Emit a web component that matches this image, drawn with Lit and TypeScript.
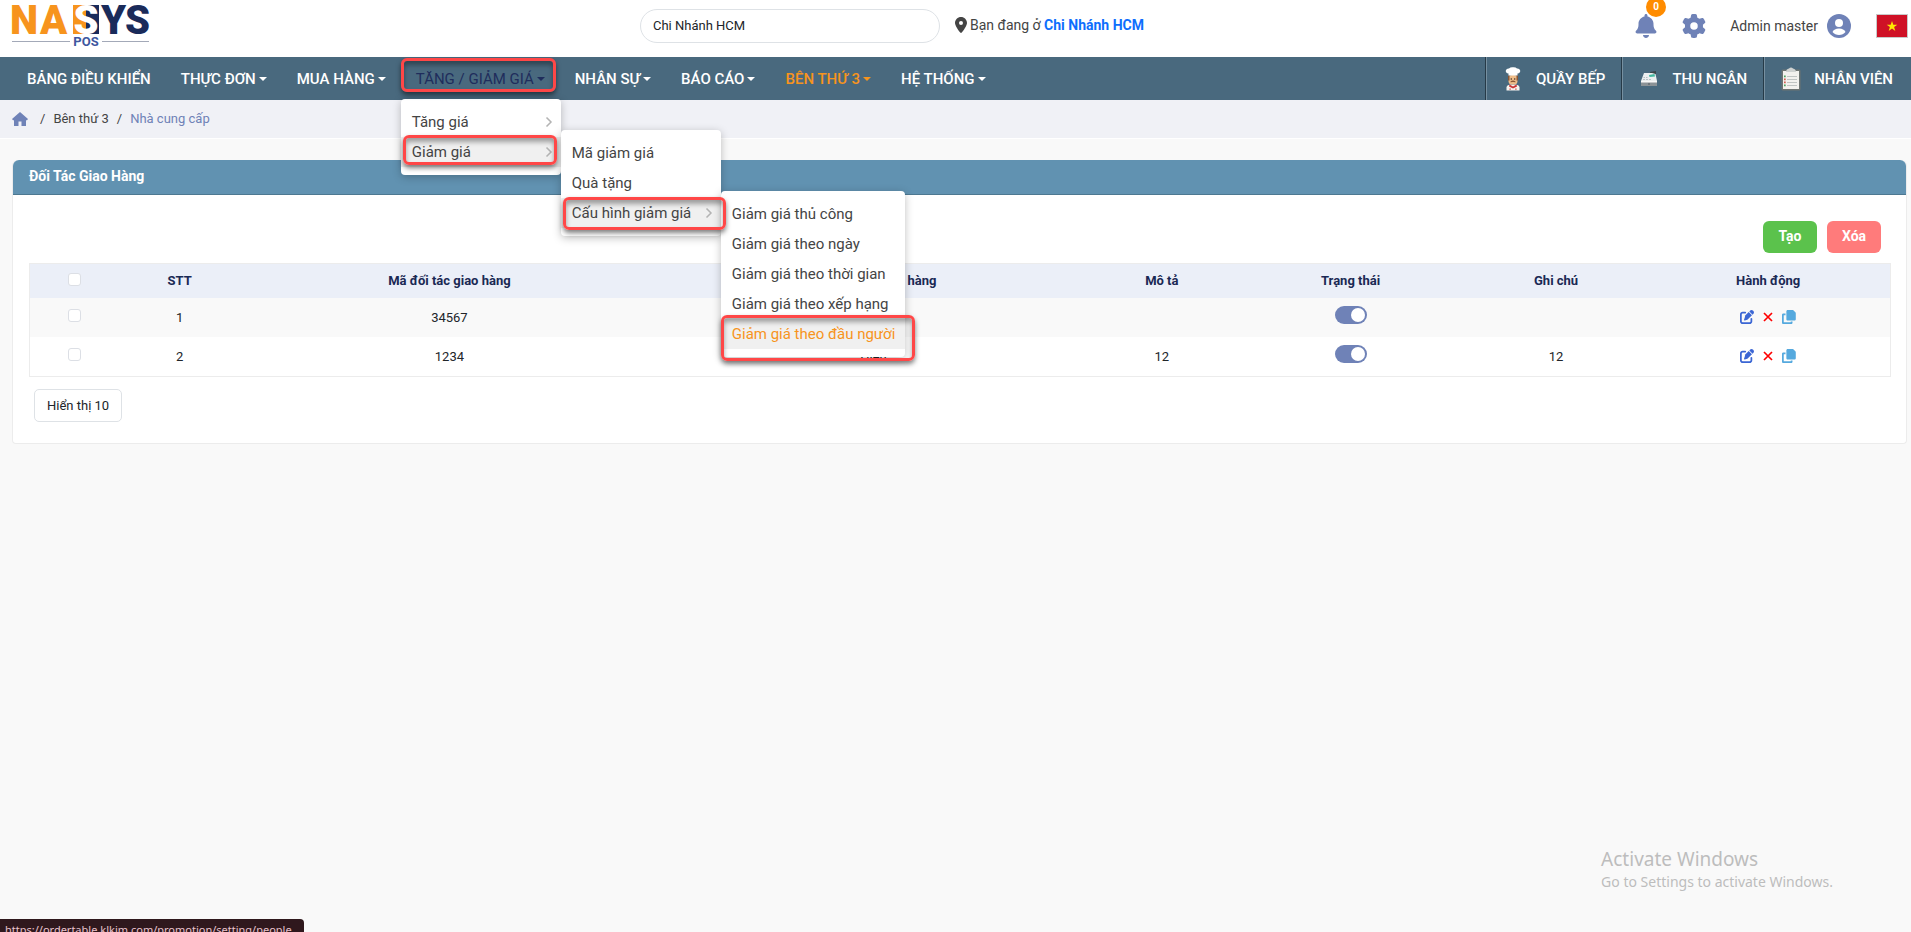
import { LitElement, html, css, svg, nothing } from "lit";
import { customElement, state } from "lit/decorators.js";

interface NavItem {
  label: string;
  caret: boolean;
  tone?: "open" | "current";
}

interface Partner {
  index: number;
  code: string;
  name: string;
  description: string;
  note: string;
}

const NAV: NavItem[] = [
  { label: "BẢNG ĐIỀU KHIỂN", caret: false },
  { label: "THỰC ĐƠN", caret: true },
  { label: "MUA HÀNG", caret: true },
  { label: "TĂNG / GIẢM GIÁ", caret: true, tone: "open" },
  { label: "NHÂN SỰ", caret: true },
  { label: "BÁO CÁO", caret: true },
  { label: "BÊN THỨ 3", caret: true, tone: "current" },
  { label: "HỆ THỐNG", caret: true },
];

const PARTNERS: Partner[] = [
  { index: 1, code: "34567", name: "", description: "", note: "" },
  { index: 2, code: "1234", name: "Hiển", description: "12", note: "12" },
];

const chefIcon = svg`<svg class="station-icon" viewBox="0 0 24 24" aria-hidden="true">
  <path d="M5.500 23.500v-3q0-2.500 4-3h5q4 .5 4 3v3z" fill="#f7f4ef"/>
  <path d="M8.500 17.500l3.500 2 3.500-2 .5 2-4 2-4-2z" fill="#c93434"/>
  <rect x="7.500" y="8" width="9" height="9.500" rx="3.500" fill="#efbd89"/>
  <path d="M7 8.500h1.500v5H7zM15.500 8.500H17v5h-1.500z" fill="#8a5635"/>
  <path d="M9.500 14.500q2.500-1.800 5 0v.8q-2.500-.8-5 0z" fill="#8a5635"/>
  <path d="M7.500 8.500V6.500Q4.500 6 4.800 3.500 5.500 1.300 8 1.500 9.500 0 12 .3 14.500 0 16 1.500q2.500-.2 3.200 2Q19.500 6 16.500 6.500v2z" fill="#fff"/>
  <circle cx="10.300" cy="12" r=".8" fill="#40302a"/><circle cx="13.700" cy="12" r=".8" fill="#40302a"/>
  <path d="M8.500 21.500h1.200v1.200H8.500zM14.300 21.500h1.200v1.200h-1.200z" fill="#c93434"/>
</svg>`;

const registerIcon = svg`<svg class="station-icon" viewBox="0 0 24 24" aria-hidden="true">
  <path d="M13 5l6-1v3l-5 1z" fill="#3d4448"/>
  <path d="M7 6h8l3.500 1 1.500 7H4z" fill="#eceff0"/>
  <path d="M12 8l5.500-1 .5 2.500-5.500.5z" fill="#43b8a0"/>
  <path d="M6.500 10H8v1H6.500zM9 10h1.500v1H9zM6 12h2v1H6zM9 12h2v1H9zM12 12h2v1h-2z" fill="#b9c1c5"/>
  <path d="M4 14.500h16V19H4z" fill="#8b9296"/>
  <path d="M4 14h16v1.500H4z" fill="#f8f8f8"/>
  <path d="M11 16.500h2v1h-2z" fill="#555b60"/>
</svg>`;

const clipboardIcon = svg`<svg class="station-icon" viewBox="0 0 24 24" aria-hidden="true">
  <rect x="2.500" y="2.500" width="19" height="21" rx="1.500" fill="#6d7472"/>
  <rect x="4" y="4" width="16" height="18" fill="#f2f1ee"/>
  <path d="M7 5q0-3 3-3.500Q12-.5 14 1.500q3 .5 3 3.500z" fill="#cfd2d1"/>
  <path d="M8 9h10v1H8zM8 12h10v1H8zM8 15h10v1H8zM8 18h10v1H8z" fill="#c0c4c3"/>
  <path d="M5 8.500h1.700v1.700H5z" fill="#4aa35c"/>
  <path d="M5 11.500h1.700v1.700H5zM5 14.500h1.700v1.700H5z" fill="#d25b4d"/>
  <path d="M5 17.500h1.700v1.700H5z" fill="#4aa35c"/>
</svg>`;

const STATIONS = [
  { label: "QUẦY BẾP", icon: chefIcon },
  { label: "THU NGÂN", icon: registerIcon },
  { label: "NHÂN VIÊN", icon: clipboardIcon },
];

const chevron = svg`<svg class="chevron" viewBox="0 0 8 12" aria-hidden="true">
  <path d="M1.500 1.500 6 6l-4.500 4.500" fill="none" stroke="#b3b3b3" stroke-width="1.500"/>
</svg>`;

@customElement("app-root")
export class AppRoot extends LitElement {
  @state() private active = [true, true];

  static styles = css`
    :host {
      display: flex;
      flex-direction: column;
      position: relative;
      min-height: 100vh;
      overflow: hidden;
      background: #f9f9f9;
      color: #444;
      font-family: Roboto, "Liberation Sans", sans-serif;
      font-size: 14px;
      line-height: 20px;
    }
    *, *::before, *::after { box-sizing: border-box; }
    a { color: inherit; text-decoration: none; }
    button { font: inherit; cursor: pointer; }
    ul, ol { list-style: none; margin: 0; padding: 0; }
    svg { display: block; flex: none; }

    .topbar {
      display: grid;
      grid-template-columns: repeat(3, 1fr);
      height: 57px;
      background: #fff;
    }
    .brand { padding-left: 12px; }
    .logo { width: 138px; height: 48px; overflow: visible; }
    .logo text { font-family: Roboto, sans-serif; font-weight: 900; }
    .logo .tagline { font-weight: 700; }
    .branch { display: flex; align-items: center; gap: 15px; height: 34px; margin-top: 9px; padding-left: 3px; white-space: nowrap; }
    .branch-input {
      width: 300px;
      height: 34px;
      border: 1px solid #dee2e6;
      border-radius: 17px;
      padding: 0 12px 2px;
      background: #fff;
      color: #212529;
      font: 13px/20px Roboto, sans-serif;
      outline: none;
    }
    .place { display: flex; align-items: center; gap: 3px; height: 32px; align-self: flex-start; }
    .place-pin { width: 12px; height: 16px; }
    .place-name { color: #0d6efd; font-weight: 700; }
    .tools { display: flex; justify-content: flex-end; align-items: center; height: 34px; margin-top: 9px; padding-right: 3px; }
    .tool { position: relative; display: flex; padding: 0; border: 0; background: none; }
    .tool svg { width: 24px; height: 24px; }
    .bell, .gear { margin-right: 24px; }
    .badge {
      position: absolute;
      left: 12px;
      top: -17px;
      width: 20px;
      height: 20px;
      border-radius: 10px;
      background: #ff8c00;
      color: #fff;
      font-size: 10px;
      font-weight: 700;
      text-align: center;
    }
    .account { display: flex; align-items: center; gap: 9px; margin-right: 25px; white-space: nowrap; }
    .account svg { width: 24px; height: 24px; }
    .flag { padding: 0; border: 0; background: none; }
    .flag svg { width: 32px; height: 24px; }

    .navbar { display: flex; height: 43px; background: #49697e; color: #fff; font-size: 15px; }
    .menu { display: flex; flex: 1; padding-left: 12px; }
    .menu-item { position: relative; display: flex; }
    .menu-link { display: flex; align-items: center; gap: 3px; padding: 0 15px; white-space: nowrap; font-weight: 500; }
    .menu-link.open { color: #1f2d5c; font-weight: 400; }
    .menu-link.current { color: #f7941d; }
    .caret { border: 4px solid transparent; border-top-color: currentColor; border-bottom: 0; }
    .stations { display: flex; padding-right: 2px; }
    .station {
      display: flex;
      align-items: center;
      gap: 11px;
      padding: 0 16px 0 15px;
      border-left: 1px solid #263a47;
      box-shadow: inset 1px 0 #7790a0;
      font-weight: 500;
      white-space: nowrap;
    }
    .station-icon { width: 24px; height: 24px; }

    .panel {
      position: absolute;
      z-index: 2;
      padding: 8px 0;
      border-radius: 4px;
      background: #fff;
      box-shadow: 0 2px 8px rgba(0, 0, 0, 0.25);
      color: #444;
      font-size: 15px;
      line-height: 30px;
      white-space: nowrap;
    }
    .panel-first { top: 42px; left: 0; width: 160px; }
    .panel-second { top: -7px; left: 160px; width: 160px; }
    .panel-third { top: -7px; left: 160px; width: 184px; }
    .panel-item { position: relative; }
    .panel-link { display: flex; justify-content: space-between; align-items: center; height: 30px; padding: 0 8px 0 11px; }
    .panel-link.hover { background: #f0f0f0; }
    .panel-link.picked { background: #f0f0f0; color: #f7941d; }
    .chevron { width: 8px; height: 12px; }
    .mark {
      position: absolute;
      z-index: 5;
      border: 3px solid #ff4747;
      border-radius: 6px;
      box-shadow: 0 3px 5px rgba(0, 0, 0, 0.5), inset 0 4px 5px rgba(0, 0, 0, 0.35);
      pointer-events: none;
    }
    .mark-menu { inset: 1px 4px 8px 0; }
    .mark-first { inset: -2px 4px 2px 2px; }
    .mark-second { inset: -1px -5px -2px 2px; }
    .mark-third { inset: -4px -10px -12px 0; }

    .crumbs {
      display: flex;
      align-items: center;
      gap: 12px;
      height: 39px;
      padding: 0 12px;
      border-bottom: 1px solid #fff;
      background: #f0f1f6;
      font-size: 13px;
    }
    .crumbs ol { display: flex; gap: 8px; }
    .crumbs li::before { content: "/"; margin-right: 8px; }
    .crumb-last a { color: #6f82b7; }
    .home svg { width: 16px; height: 14px; }

    .card {
      margin: 21px 4px 0 12px;
      border: 1px solid #ececec;
      border-top: 0;
      border-radius: 6px 6px 4px 4px;
      background: #fff;
    }
    .card-title {
      margin: 0;
      height: 35px;
      padding: 6px 16px;
      border-bottom: 1px solid #4d7891;
      border-radius: 6px 6px 0 0;
      background: #6192b1;
      color: #fff;
      font-size: 14px;
      line-height: 20px;
      font-weight: 700;
    }
    .card-body { padding: 26px 15px 21px 16px; }
    .actions { display: flex; justify-content: flex-end; gap: 10px; padding: 0 10px 10px; }
    .action { width: 54px; height: 32px; padding: 0 0 2px; border: 0; border-radius: 6px; color: #fff; font-weight: 700; }
    .create { background: #5bc24c; }
    .remove { background: #ff7b7b; }

    .grid {
      width: 100%;
      table-layout: fixed;
      border-collapse: separate;
      border-spacing: 0;
      border: 1px solid #ececec;
      color: #212529;
      font-size: 13px;
      text-align: center;
    }
    .grid th { height: 34px; padding: 0; background: #ebeff8; color: #1a2954; font-weight: 700; }
    .grid td { height: 39px; padding: 0; }
    .grid tbody tr:first-child td { background: #f9f9f9; }
    .c-check { width: 4.8%; }
    .c-index { width: 6.5%; }
    .c-code { width: 22.5%; }
    .c-name { width: 23.1%; }
    .c-text { width: 7.9%; }
    .c-state { width: 12.4%; }
    .c-note { width: 9.7%; }
    .check {
      appearance: none;
      display: block;
      width: 13px;
      height: 13px;
      margin: 0 auto 4px;
      border: 1px solid #dcdfe5;
      border-radius: 3px;
      background: #fff;
    }
    .switch {
      appearance: none;
      display: block;
      width: 32px;
      height: 18px;
      margin: 0 auto 5px;
      padding: 2px;
      border-radius: 9px;
      background: #b9c0d4;
    }
    .switch::before { content: ""; display: block; width: 14px; height: 14px; border-radius: 7px; background: #fff; }
    .switch:checked { background: #6f82b7; }
    .switch:checked::before { margin-left: auto; }
    .row-tools { display: flex; justify-content: center; gap: 9px; padding-bottom: 2px; }
    .row-tool { display: flex; align-items: center; padding: 0; border: 0; background: none; }
    .row-tool svg { width: 14px; height: 14px; }
    .row-tool .cross { width: 10px; height: 10px; }
    .page-size {
      display: block;
      margin: 12px 0 0 5px;
      height: 33px;
      padding: 0 12px;
      border: 1px solid #dee2e6;
      border-radius: 5px;
      background: #fff;
      color: #212529;
      font-size: 13px;
    }

    .watermark {
      position: absolute;
      right: 78px;
      bottom: 40px;
      color: #bdbdbd;
      font-family: "Noto Sans", "Open Sans", sans-serif;
      font-size: 14px;
      line-height: 20px;
      pointer-events: none;
    }
    .watermark-title { font-size: 19px; line-height: 26px; }
    .status {
      position: absolute;
      left: 0;
      bottom: 0;
      height: 13px;
      padding: 2px 12px 0 5px;
      overflow: hidden;
      border-top-right-radius: 4px;
      background: #2f181d;
      color: #e9c3cd;
      font-family: "Noto Sans", "Open Sans", sans-serif;
      font-size: 11px;
      line-height: 18px;
      white-space: nowrap;
    }
  `;

  private toggle(row: number) {
    this.active = this.active.map((on, i) => (i === row ? !on : on));
  }

  private renderLogo() {
    return html`<a class="brand" href="#" aria-label="NASYS POS"><svg class="logo" viewBox="0 0 138 48">
      <text x="-2" y="34" font-size="40" fill="#f7941d">N</text>
      <text x="28" y="34" font-size="40" fill="#f7941d">A</text>
      <path d="M61 5h13v29H61z" fill="#f7941d"/>
      <path d="M74 5h13v29H74z" fill="#1a2b5a"/>
      <text x="74" y="34" font-size="40" fill="#fff" text-anchor="middle">S</text>
      <text x="89" y="34" font-size="40" fill="#1a2b5a">Y</text>
      <text x="113" y="34" font-size="40" fill="#1a2b5a">S</text>
      <path d="M0 41h58v1H0zM90 41h47v1H90z" fill="#a3a9b8"/>
      <text class="tagline" x="74" y="46" font-size="13" fill="#3e579f" text-anchor="middle">POS</text>
    </svg></a>`;
  }

  private renderDropdown() {
    return html`
      <ul class="panel panel-first">
        <li class="panel-item"><a class="panel-link" href="#">Tăng giá ${chevron}</a></li>
        <li class="panel-item">
          <a class="panel-link hover" href="#">Giảm giá ${chevron}</a>
          <span class="mark mark-first"></span>
          <ul class="panel panel-second">
            <li class="panel-item"><a class="panel-link" href="#">Mã giảm giá</a></li>
            <li class="panel-item"><a class="panel-link" href="#">Quà tặng</a></li>
            <li class="panel-item">
              <a class="panel-link hover" href="#">Cấu hình giảm giá ${chevron}</a>
              <ul class="panel panel-third">
                <li class="panel-item"><a class="panel-link" href="#">Giảm giá thủ công</a></li>
                <li class="panel-item"><a class="panel-link" href="#">Giảm giá theo ngày</a></li>
                <li class="panel-item"><a class="panel-link" href="#">Giảm giá theo thời gian</a></li>
                <li class="panel-item"><a class="panel-link" href="#">Giảm giá theo xếp hạng</a></li>
                <li class="panel-item">
                  <a class="panel-link picked" href="#">Giảm giá theo đầu người</a>
                  <span class="mark mark-third"></span>
                </li>
              </ul>
              <span class="mark mark-second"></span>
            </li>
          </ul>
        </li>
      </ul>`;
  }

  private renderRow(p: Partner, i: number) {
    return html`<tr>
      <td><input class="check" type="checkbox" aria-label="Chọn ${p.code}" /></td>
      <td>${p.index}</td>
      <td>${p.code}</td>
      <td>${p.name}</td>
      <td>${p.description}</td>
      <td>
        <input class="switch" type="checkbox" role="switch" aria-label="Trạng thái ${p.code}"
          .checked=${this.active[i]} @change=${() => this.toggle(i)} />
      </td>
      <td>${p.note}</td>
      <td>
        <div class="row-tools">
          <button class="row-tool" aria-label="Sửa">
            <svg viewBox="0 0 512 512" fill="#3b66d4"><path d="M472 22l18 18c28 28 28 72 0 100l-30 30L342 52l30-30c28-28 72-28 100 0zM172 222L319 75l118 118-147 147c-6 6-14 11-23 14l-89 30c-9 3-18 1-25-6s-9-16-6-25l30-89c3-9 8-16 14-23zM96 64h96c18 0 32 14 32 32s-14 32-32 32H96c-18 0-32 14-32 32v256c0 18 14 32 32 32h256c18 0 32-14 32-32v-96c0-18 14-32 32-32s32 14 32 32v96c0 53-43 96-96 96H96c-53 0-96-43-96-96V160c0-53 43-96 96-96z"/></svg>
          </button>
          <button class="row-tool" aria-label="Xóa">
            <svg class="cross" viewBox="0 0 10 10"><path d="M1 1l8 8M9 1L1 9" stroke="#f00" stroke-width="1.700"/></svg>
          </button>
          <button class="row-tool" aria-label="Sao chép">
            <svg viewBox="0 0 512 512" fill="#55a9de"><path d="M208 0h180c13 0 25 5 34 14l68 68c9 9 14 21 14 34v220c0 27-21 48-48 48H208c-27 0-48-21-48-48V48c0-27 21-48 48-48zM48 128h80v64H64v256h256v-32h64v48c0 27-21 48-48 48H48c-27 0-48-21-48-48V176c0-27 21-48 48-48z"/></svg>
          </button>
        </div>
      </td>
    </tr>`;
  }

  render() {
    return html`
      <header class="topbar">
        ${this.renderLogo()}
        <div class="branch">
          <input class="branch-input" aria-label="Chi nhánh" .value=${"Chi Nhánh HCM"} />
          <div class="place">
            <svg class="place-pin" viewBox="0 0 384 512" fill="#444"><path d="M216 499C267 435 384 279 384 192 384 86 298 0 192 0S0 86 0 192c0 87 117 243 168 307 12 16 36 16 48 0zM192 128a64 64 0 1 1 0 128 64 64 0 1 1 0-128z"/></svg>
            <span>Bạn đang ở <a class="place-name" href="#">Chi Nhánh HCM</a></span>
          </div>
        </div>
        <div class="tools">
          <button class="tool bell" aria-label="Thông báo">
            <svg viewBox="0 0 448 512" fill="#6f82b7"><path d="M224 0c-18 0-32 14-32 32v19C119 66 64 131 64 208v19c0 47-17 92-48 127l-8 9c-8 9-10 22-5 33s16 18 29 18h384c13 0 24-7 29-18s3-24-5-33l-8-9c-31-35-48-80-48-127v-19c0-77-55-142-128-157V32c0-18-14-32-32-32zm45 493c12-12 19-28 19-45H160c0 17 7 33 19 45s28 19 45 19 33-7 45-19z"/></svg>
            <span class="badge">0</span>
          </button>
          <button class="tool gear" aria-label="Cài đặt">
            <svg viewBox="0 0 512 512" fill="#6f82b7"><path d="M496 167c3 9 0 18-7 25l-43 39a196 196 0 0 1 0 50l43 39c7 7 10 16 7 25-4 12-10 23-16 34l-4 8c-7 11-14 22-23 32-6 8-16 10-25 7l-56-17c-13 10-28 19-44 25l-12 57c-2 9-9 17-18 18-14 2-28 4-42 4s-29-2-43-4c-9-1-16-9-18-18l-12-57c-16-6-31-15-44-25l-56 17c-9 3-19 1-25-7-9-10-16-21-23-32l-4-8c-6-11-12-22-16-34-3-9 0-18 7-25l43-39a196 196 0 0 1 0-50l-43-39c-7-7-10-16-7-25 4-12 10-23 16-34l4-8c7-11 14-22 23-32 6-8 16-10 25-7l56 17c13-10 28-19 44-25l12-57c2-9 9-17 18-18 14-2 28-4 43-4s28 2 42 4c9 1 16 9 18 18l12 57c16 6 31 15 44 25l56-17c9-3 19-1 25 7 9 10 16 21 23 32l4 8c6 11 12 22 16 34zM256 336a80 80 0 1 0 0-160 80 80 0 1 0 0 160z"/></svg>
          </button>
          <a class="account" href="#">
            <span>Admin master</span>
            <svg viewBox="0 0 24 24"><circle cx="12" cy="12" r="12" fill="#6f82b7"/><circle cx="12" cy="9" r="4" fill="#fff"/><path d="M5.500 18q1.500-3.500 6.500-3.500t6.500 3.500q-2.500 3-6.500 3t-6.500-3z" fill="#fff"/></svg>
          </a>
          <button class="flag" aria-label="Tiếng Việt">
            <svg viewBox="0 0 32 24"><path d="M0 0h32v24H0z" fill="#c9c9c9"/><path d="M1 1h30v22H1z" fill="#cf1126"/><path d="M16 7l1.300 3.700h4l-3.200 2.400 1.200 3.900-3.300-2.400-3.300 2.400 1.200-3.900-3.200-2.400h4z" fill="#ffe600"/></svg>
          </button>
        </div>
      </header>

      <nav class="navbar">
        <ul class="menu">
          ${NAV.map(
            (item) => html`<li class="menu-item">
              <a class="menu-link ${item.tone ?? ""}" href="#">
                ${item.label}${item.caret ? html`<span class="caret"></span>` : nothing}
              </a>
              ${item.tone === "open" ? html`<span class="mark mark-menu"></span>${this.renderDropdown()}` : nothing}
            </li>`
          )}
        </ul>
        <div class="stations">
          ${STATIONS.map((s) => html`<a class="station" href="#">${s.icon}${s.label}</a>`)}
        </div>
      </nav>

      <nav class="crumbs" aria-label="Breadcrumb">
        <a class="home" href="#" aria-label="Trang chủ">
          <svg viewBox="0 0 16 14" fill="#6f82b7"><path d="M8 0l8 7-1 1.200h-1V14H9.500V9.500h-3V14H2V8.200H1L0 7z"/></svg>
        </a>
        <ol>
          <li><a href="#">Bên thứ 3</a></li>
          <li class="crumb-last"><a href="#">Nhà cung cấp</a></li>
        </ol>
      </nav>

      <main class="card">
        <h1 class="card-title">Đối Tác Giao Hàng</h1>
        <div class="card-body">
          <div class="actions">
            <button class="action create">Tạo</button>
            <button class="action remove">Xóa</button>
          </div>
          <table class="grid">
            <thead>
              <tr>
                <th class="c-check"><input class="check" type="checkbox" aria-label="Chọn tất cả" /></th>
                <th class="c-index">STT</th>
                <th class="c-code">Mã đối tác giao hàng</th>
                <th class="c-name">Tên đối tác giao hàng</th>
                <th class="c-text">Mô tả</th>
                <th class="c-state">Trạng thái</th>
                <th class="c-note">Ghi chú</th>
                <th>Hành động</th>
              </tr>
            </thead>
            <tbody>
              ${PARTNERS.map((p, i) => this.renderRow(p, i))}
            </tbody>
          </table>
          <button class="page-size">Hiển thị 10</button>
        </div>
      </main>

      <aside class="watermark">
        <div class="watermark-title">Activate Windows</div>
        <div>Go to Settings to activate Windows.</div>
      </aside>
      <div class="status">https://ordertable.klkim.com/promotion/setting/people</div>
    `;
  }
}
